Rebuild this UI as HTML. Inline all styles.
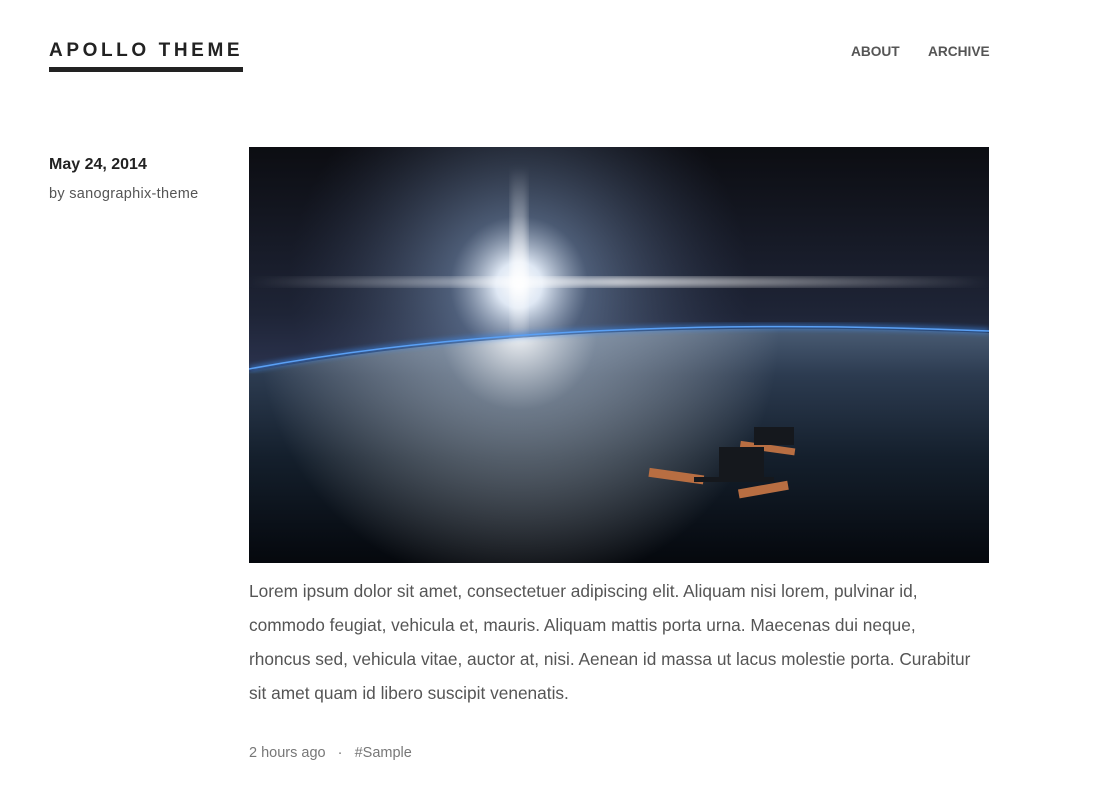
<!DOCTYPE html>
<html><head><meta charset="utf-8"><style>
body{margin:0;background:#fff;width:1095px;height:807px;overflow:hidden;font-family:"Liberation Sans",sans-serif;}
.logo{position:absolute;left:49px;top:40px;font-size:19px;font-weight:bold;letter-spacing:3.6px;color:#222;white-space:nowrap;}
.bar{position:absolute;left:49px;top:67px;width:194px;height:5px;background:#222;}
.nav{position:absolute;top:44px;font-size:13.7px;font-weight:bold;color:#555;}
.date{position:absolute;left:49px;top:156px;font-size:16px;font-weight:bold;color:#222;}
.by{position:absolute;left:49px;top:186px;font-size:14.5px;color:#555;letter-spacing:0.3px;}
.img{position:absolute;left:249px;top:147px;width:740px;height:416px;}
.body{position:absolute;left:249px;top:574px;font-size:17.3px;line-height:34px;color:#555;white-space:nowrap;}
.meta{position:absolute;left:249px;top:745px;font-size:14.5px;color:#777;white-space:nowrap;}
</style></head><body>
<div class="logo">APOLLO THEME</div><div class="bar"></div>
<div class="nav" style="left:851px">ABOUT</div>
<div class="nav" style="left:928px">ARCHIVE</div>
<div class="date">May 24, 2014</div>
<div class="by">by sanographix-theme</div>
<svg class="img" viewBox="0 0 740 416" xmlns="http://www.w3.org/2000/svg">
<defs>
<linearGradient id="sky" x1="0" y1="0" x2="0" y2="1"><stop offset="0" stop-color="#0c0d12"/><stop offset="0.4" stop-color="#1e2436"/><stop offset="0.55" stop-color="#2c3450"/></linearGradient>
<radialGradient id="sun" cx="270" cy="138" r="230" gradientUnits="userSpaceOnUse"><stop offset="0" stop-color="#fff"/><stop offset="0.1" stop-color="#dfe8f4"/><stop offset="0.3" stop-color="#6f86a8" stop-opacity="0.6"/><stop offset="1" stop-color="#3a4560" stop-opacity="0"/></radialGradient>
<linearGradient id="earth" x1="0" y1="0" x2="0" y2="1"><stop offset="0" stop-color="#4a5c74"/><stop offset="0.2" stop-color="#2c3b50"/><stop offset="0.55" stop-color="#141f2c"/><stop offset="1" stop-color="#05080d"/></linearGradient>
<radialGradient id="eg" cx="270" cy="185" r="260" gradientUnits="userSpaceOnUse"><stop offset="0" stop-color="#fff" stop-opacity="0.95"/><stop offset="0.3" stop-color="#c8d4e2" stop-opacity="0.45"/><stop offset="1" stop-color="#fff" stop-opacity="0"/></radialGradient>
<linearGradient id="hx" x1="0" y1="0" x2="1" y2="0"><stop offset="0" stop-color="#fff" stop-opacity="0"/><stop offset="0.5" stop-color="#fff" stop-opacity="0.7"/><stop offset="1" stop-color="#fff" stop-opacity="0"/></linearGradient>
<linearGradient id="vx" x1="0" y1="0" x2="0" y2="1"><stop offset="0" stop-color="#fff" stop-opacity="0"/><stop offset="0.6" stop-color="#fff" stop-opacity="0.7"/><stop offset="1" stop-color="#fff" stop-opacity="0"/></linearGradient>
<filter id="b"><feGaussianBlur stdDeviation="3"/></filter>
</defs>
<rect width="740" height="416" fill="url(#sky)"/>
<rect width="740" height="416" fill="url(#sun)"/>
<rect x="0" y="130" width="740" height="10" fill="url(#hx)" filter="url(#b)"/>
<rect x="262" y="20" width="16" height="180" fill="url(#vx)" filter="url(#b)"/>
<path d="M0,225 Q300,168 740,186 L740,416 L0,416 Z" fill="url(#earth)"/>
<path d="M0,225 Q300,168 740,186 L740,416 L0,416 Z" fill="url(#eg)"/>
<path d="M0,222 Q300,166 740,184" fill="none" stroke="#3d8cf0" stroke-width="3" filter="url(#b)"/>
<path d="M0,222 Q300,166 740,184" fill="none" stroke="#5aa0f5" stroke-width="1.5"/>
<g fill="#b86e42"><rect x="400" y="325" width="55" height="9" transform="rotate(8 430 328)"/><rect x="490" y="300" width="55" height="7" transform="rotate(8 535 310)"/><rect x="490" y="338" width="50" height="9" transform="rotate(-10 515 346)"/></g>
<g fill="#15181d"><rect x="470" y="300" width="45" height="35"/><rect x="505" y="280" width="40" height="18"/><rect x="445" y="330" width="80" height="5"/></g>
</svg>
<div class="body">Lorem ipsum dolor sit amet, consectetuer adipiscing elit. Aliquam nisi lorem, pulvinar id,<br>commodo feugiat, vehicula et, mauris. Aliquam mattis porta urna. Maecenas dui neque,<br>rhoncus sed, vehicula vitae, auctor at, nisi. Aenean id massa ut lacus molestie porta. Curabitur<br>sit amet quam id libero suscipit venenatis.</div>
<div class="meta">2 hours ago &nbsp; · &nbsp; #Sample</div>
</body></html>
